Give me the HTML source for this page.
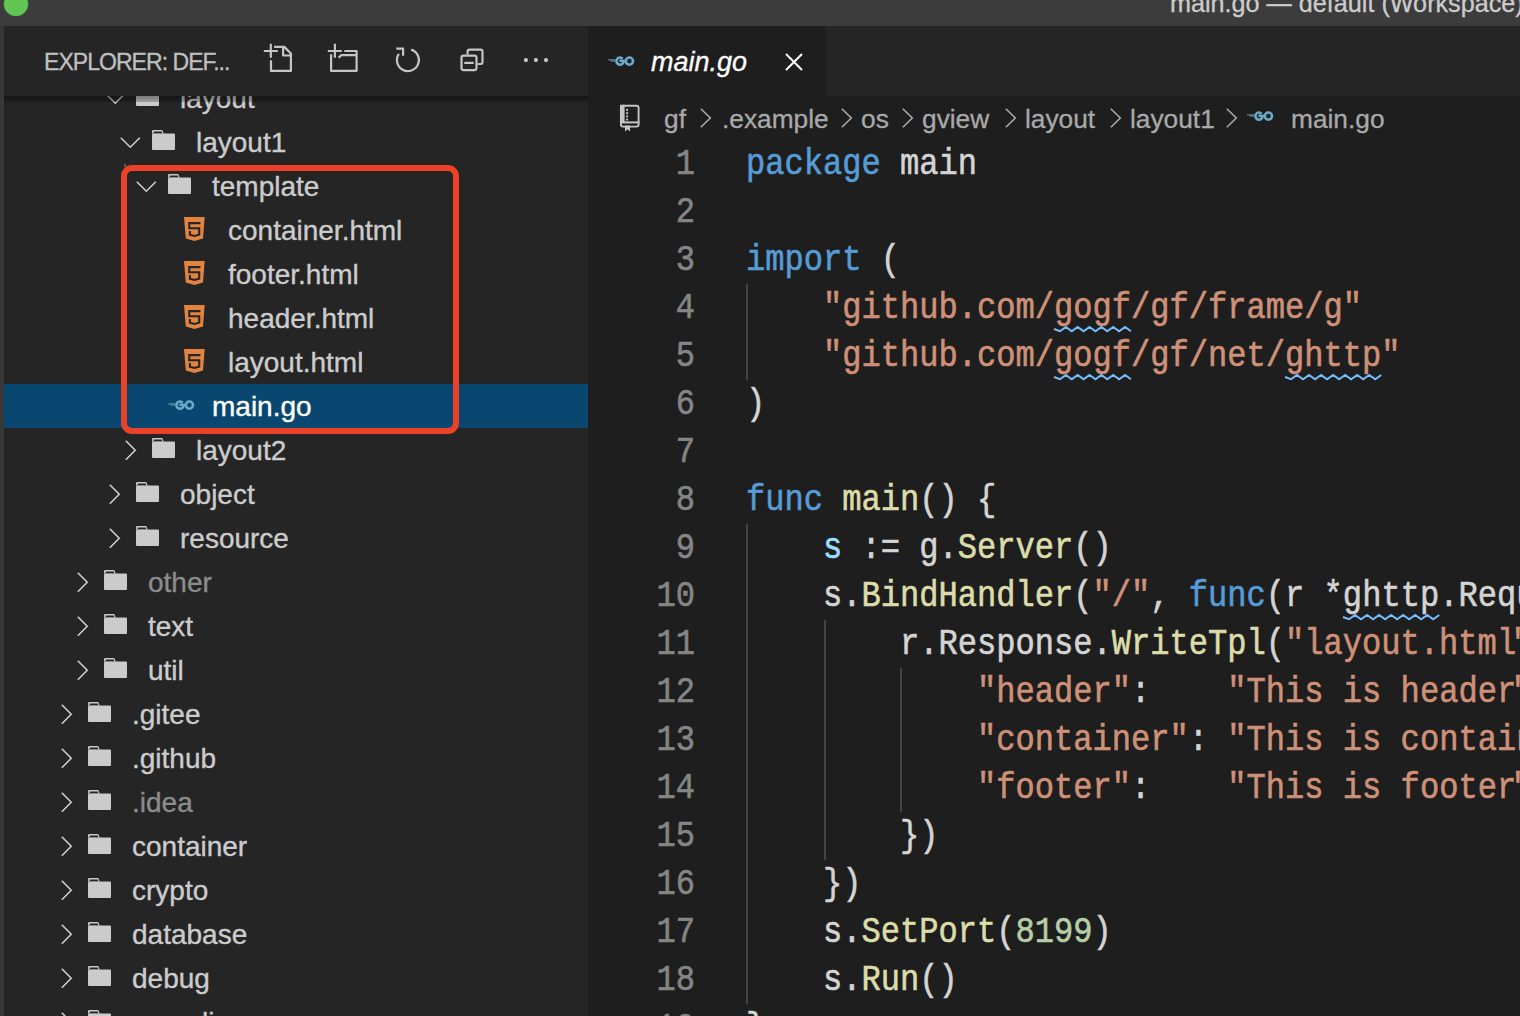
<!DOCTYPE html><html><head><meta charset="utf-8"><style>
*{margin:0;padding:0;box-sizing:border-box}
html,body{width:1520px;height:1016px;overflow:hidden;background:#3c3c3c;font-family:"Liberation Sans", sans-serif}
.a{position:absolute}
#title{left:0;top:0;width:1520px;height:26px;background:#3c3c3c}
#act{left:0;top:26px;width:4px;height:990px;background:#383838}
#side{left:4px;top:26px;width:584px;height:990px;background:#252526;overflow:hidden}
#shead{left:0;top:0;width:584px;height:70px;background:#252526;z-index:5}
#shadow{left:0;top:70px;width:584px;height:6px;z-index:5;background:linear-gradient(rgba(0,0,0,0.4),rgba(0,0,0,0.22))}
.row{position:absolute;left:0;width:584px;height:44px;color:#cccccc;font-size:28px;line-height:44px;white-space:nowrap;-webkit-text-stroke:0.35px currentColor}
.row .t{position:absolute;top:1px}
.row.dim{color:#8c8c8c}
.row.sel{background:#094771;color:#ffffff}
#tabs{left:588px;top:26px;width:932px;height:70px;background:#252526}
#tab{left:0;top:0;width:238px;height:70px;background:#1e1e1e}
#editor{left:588px;top:96px;width:932px;height:920px;background:#1e1e1e;overflow:hidden}
.crumb{position:absolute;top:1px;height:44px;line-height:44px;font-size:26.3px;color:#a9a9a9;white-space:nowrap;-webkit-text-stroke:0.3px currentColor}
.ln{position:absolute;width:200px;text-align:right;height:48px;line-height:48px;font-family:"Liberation Mono", monospace;font-size:36px;color:#858585;transform-origin:100% 0;transform:scaleX(0.8912);-webkit-text-stroke:0.6px currentColor}
.code{position:absolute;height:48px;line-height:48px;font-family:"Liberation Mono", monospace;font-size:36px;color:#d4d4d4;white-space:pre;transform-origin:0 0;transform:scaleX(0.8912);-webkit-text-stroke:0.6px currentColor}
.k{color:#569cd6} .s{color:#ce9178} .f{color:#dcdcaa} .n{color:#b5cea8} .v{color:#9cdcfe}
.guide{position:absolute;width:2px;background:#444444}
.sq{position:absolute;height:7px;overflow:visible}
</style></head><body><div id="title" class="a"><div class="a" style="left:4px;top:-8px;width:24px;height:24px;border-radius:50%;background:#62c554;box-shadow:0 0 0 0.8px #3a5a35"></div><div class="a" style="left:1170px;top:-12.3px;height:30px;line-height:30px;font-size:25.2px;color:#cccccc;white-space:nowrap;-webkit-text-stroke:0.3px currentColor">main.go — default (Workspace)</div></div><div id="act" class="a"></div><div id="side" class="a"><div id="shead" class="a"><div class="a" style="left:40px;top:21.2px;height:30px;line-height:30px;font-size:23px;color:#c0c0c0;letter-spacing:-0.95px;white-space:nowrap;-webkit-text-stroke:0.3px currentColor">EXPLORER: DEF...</div><svg class="a" style="left:254px;top:12px" width="40" height="40" viewBox="0 0 40 40" fill="none" stroke="#c5c5c5" stroke-width="2.2" stroke-linejoin="round"><path d="M5.8 13H19.8M12.8 5.8V19.8M16.1 8.9H26.3L32.9 15.5V32.9H13V22.2M25.1 8.9V17.5H32.9"/></svg><svg class="a" style="left:254px;top:12px" width="110" height="40" viewBox="0 0 110 40" fill="none" stroke="#c5c5c5" stroke-width="2.2" stroke-linejoin="round"><path d="M69.8 13H83.8M76.9 5.8V19.8M73.1 16.2V32.9H98.6V13H86.3M98.6 17.1H83.3L80.6 19.8"/></svg><svg class="a" style="left:384px;top:12px" width="40" height="40" viewBox="0 0 40 40" fill="none" stroke="#c5c5c5" stroke-width="2.2" stroke-linejoin="round"><path d="M23.2 11.6A11 11 0 1 1 10.9 15.8"/><path d="M8.3 10.7H15.1V17.7"/></svg><svg class="a" style="left:454px;top:20px" width="30" height="30" viewBox="0 0 30 30" fill="none" stroke="#c5c5c5" stroke-width="2.2" stroke-linejoin="round"><path d="M9.6 8.6V5.6A2 2 0 0 1 11.6 3.6H22.5A2 2 0 0 1 24.5 5.6V16A2 2 0 0 1 22.5 18H19.5"/><rect x="3.5" y="9.7" width="15" height="14.4" rx="2"/><path d="M6.3 16.9H15.7"/></svg><svg class="a" style="left:514px;top:26px" width="40" height="16" viewBox="0 0 40 16" fill="#c5c5c5"><circle cx="7.9" cy="8.1" r="2.1"/><circle cx="17.9" cy="8.1" r="2.1"/><circle cx="28" cy="8.1" r="2.1"/></svg></div><div id="shadow" class="a"></div><div class="row" style="top:50px"><svg class="a" style="left:101px;top:17px" width="21" height="12" viewBox="0 0 21 12"><polyline points="0.8,0.8 10.3,10.2 19.8,0.8" fill="none" stroke="#cccccc" stroke-width="1.6"/></svg><svg class="a" style="left:132px;top:10px" width="23" height="20" viewBox="0 0 23 20"><path d="M0 4.5V1.4A1.4 1.4 0 0 1 1.4 0H10.2L11.8 3.4H0Z" fill="#cbcbcb"/><rect x="1.6" y="1.6" width="8.4" height="1.9" rx="0.5" fill="#252526"/><rect x="0" y="3.4" width="23" height="16.6" rx="1" fill="#cbcbcb"/></svg><span class="t" style="left:176px">layout</span></div><div class="row" style="top:94px"><svg class="a" style="left:116px;top:17px" width="21" height="12" viewBox="0 0 21 12"><polyline points="0.8,0.8 10.3,10.2 19.8,0.8" fill="none" stroke="#cccccc" stroke-width="1.6"/></svg><svg class="a" style="left:148px;top:10px" width="23" height="20" viewBox="0 0 23 20"><path d="M0 4.5V1.4A1.4 1.4 0 0 1 1.4 0H10.2L11.8 3.4H0Z" fill="#cbcbcb"/><rect x="1.6" y="1.6" width="8.4" height="1.9" rx="0.5" fill="#252526"/><rect x="0" y="3.4" width="23" height="16.6" rx="1" fill="#cbcbcb"/></svg><span class="t" style="left:192px">layout1</span></div><div class="row" style="top:138px"><svg class="a" style="left:132px;top:17px" width="21" height="12" viewBox="0 0 21 12"><polyline points="0.8,0.8 10.3,10.2 19.8,0.8" fill="none" stroke="#cccccc" stroke-width="1.6"/></svg><svg class="a" style="left:164px;top:10px" width="23" height="20" viewBox="0 0 23 20"><path d="M0 4.5V1.4A1.4 1.4 0 0 1 1.4 0H10.2L11.8 3.4H0Z" fill="#cbcbcb"/><rect x="1.6" y="1.6" width="8.4" height="1.9" rx="0.5" fill="#252526"/><rect x="0" y="3.4" width="23" height="16.6" rx="1" fill="#cbcbcb"/></svg><span class="t" style="left:208px">template</span></div><div class="row" style="top:182px"><svg class="a" style="left:180px;top:9px" width="21" height="24" viewBox="0 0 21 24"><path d="M0 0H20.7L19 21.6L10.4 24L1.8 21.6Z" fill="#e2843f"/><path d="M4.2 6.1H16.4M5.3 5V11.3M4.2 11.3H16.1M15.2 10.3V17.9M15.8 17.4L10.4 18.9L5 17.4M5.9 14.1V18" fill="none" stroke="#252526" stroke-width="2.1"/></svg><span class="t" style="left:224px">container.html</span></div><div class="row" style="top:226px"><svg class="a" style="left:180px;top:9px" width="21" height="24" viewBox="0 0 21 24"><path d="M0 0H20.7L19 21.6L10.4 24L1.8 21.6Z" fill="#e2843f"/><path d="M4.2 6.1H16.4M5.3 5V11.3M4.2 11.3H16.1M15.2 10.3V17.9M15.8 17.4L10.4 18.9L5 17.4M5.9 14.1V18" fill="none" stroke="#252526" stroke-width="2.1"/></svg><span class="t" style="left:224px">footer.html</span></div><div class="row" style="top:270px"><svg class="a" style="left:180px;top:9px" width="21" height="24" viewBox="0 0 21 24"><path d="M0 0H20.7L19 21.6L10.4 24L1.8 21.6Z" fill="#e2843f"/><path d="M4.2 6.1H16.4M5.3 5V11.3M4.2 11.3H16.1M15.2 10.3V17.9M15.8 17.4L10.4 18.9L5 17.4M5.9 14.1V18" fill="none" stroke="#252526" stroke-width="2.1"/></svg><span class="t" style="left:224px">header.html</span></div><div class="row" style="top:314px"><svg class="a" style="left:180px;top:9px" width="21" height="24" viewBox="0 0 21 24"><path d="M0 0H20.7L19 21.6L10.4 24L1.8 21.6Z" fill="#e2843f"/><path d="M4.2 6.1H16.4M5.3 5V11.3M4.2 11.3H16.1M15.2 10.3V17.9M15.8 17.4L10.4 18.9L5 17.4M5.9 14.1V18" fill="none" stroke="#252526" stroke-width="2.1"/></svg><span class="t" style="left:224px">layout.html</span></div><div class="row sel" style="top:358px"><svg class="a" style="left:164px;top:14.7px" width="28" height="12" viewBox="0 0 28 12"><rect x="0" y="4.2" width="7" height="1.2" fill="#55869c"/><rect x="2.5" y="5.2" width="4.5" height="1.4" fill="#55869c"/><circle cx="21.4" cy="6.1" r="3.6" fill="none" stroke="#6aaac8" stroke-width="2.6"/><path d="M14.6 3.6A3.6 3.6 0 1 0 15.6 5.8H11.4" fill="none" stroke="#6aaac8" stroke-width="2.6"/></svg><span class="t" style="left:208px">main.go</span></div><div class="row" style="top:402px"><svg class="a" style="left:121px;top:12px" width="12" height="21" viewBox="0 0 12 21"><polyline points="0.8,0.8 10.2,10.3 0.8,19.8" fill="none" stroke="#cccccc" stroke-width="1.6"/></svg><svg class="a" style="left:148px;top:10px" width="23" height="20" viewBox="0 0 23 20"><path d="M0 4.5V1.4A1.4 1.4 0 0 1 1.4 0H10.2L11.8 3.4H0Z" fill="#cbcbcb"/><rect x="1.6" y="1.6" width="8.4" height="1.9" rx="0.5" fill="#252526"/><rect x="0" y="3.4" width="23" height="16.6" rx="1" fill="#cbcbcb"/></svg><span class="t" style="left:192px">layout2</span></div><div class="row" style="top:446px"><svg class="a" style="left:105px;top:12px" width="12" height="21" viewBox="0 0 12 21"><polyline points="0.8,0.8 10.2,10.3 0.8,19.8" fill="none" stroke="#cccccc" stroke-width="1.6"/></svg><svg class="a" style="left:132px;top:10px" width="23" height="20" viewBox="0 0 23 20"><path d="M0 4.5V1.4A1.4 1.4 0 0 1 1.4 0H10.2L11.8 3.4H0Z" fill="#cbcbcb"/><rect x="1.6" y="1.6" width="8.4" height="1.9" rx="0.5" fill="#252526"/><rect x="0" y="3.4" width="23" height="16.6" rx="1" fill="#cbcbcb"/></svg><span class="t" style="left:176px">object</span></div><div class="row" style="top:490px"><svg class="a" style="left:105px;top:12px" width="12" height="21" viewBox="0 0 12 21"><polyline points="0.8,0.8 10.2,10.3 0.8,19.8" fill="none" stroke="#cccccc" stroke-width="1.6"/></svg><svg class="a" style="left:132px;top:10px" width="23" height="20" viewBox="0 0 23 20"><path d="M0 4.5V1.4A1.4 1.4 0 0 1 1.4 0H10.2L11.8 3.4H0Z" fill="#cbcbcb"/><rect x="1.6" y="1.6" width="8.4" height="1.9" rx="0.5" fill="#252526"/><rect x="0" y="3.4" width="23" height="16.6" rx="1" fill="#cbcbcb"/></svg><span class="t" style="left:176px">resource</span></div><div class="row dim" style="top:534px"><svg class="a" style="left:73px;top:12px" width="12" height="21" viewBox="0 0 12 21"><polyline points="0.8,0.8 10.2,10.3 0.8,19.8" fill="none" stroke="#cccccc" stroke-width="1.6"/></svg><svg class="a" style="left:100px;top:10px" width="23" height="20" viewBox="0 0 23 20"><path d="M0 4.5V1.4A1.4 1.4 0 0 1 1.4 0H10.2L11.8 3.4H0Z" fill="#cbcbcb"/><rect x="1.6" y="1.6" width="8.4" height="1.9" rx="0.5" fill="#252526"/><rect x="0" y="3.4" width="23" height="16.6" rx="1" fill="#cbcbcb"/></svg><span class="t" style="left:144px">other</span></div><div class="row" style="top:578px"><svg class="a" style="left:73px;top:12px" width="12" height="21" viewBox="0 0 12 21"><polyline points="0.8,0.8 10.2,10.3 0.8,19.8" fill="none" stroke="#cccccc" stroke-width="1.6"/></svg><svg class="a" style="left:100px;top:10px" width="23" height="20" viewBox="0 0 23 20"><path d="M0 4.5V1.4A1.4 1.4 0 0 1 1.4 0H10.2L11.8 3.4H0Z" fill="#cbcbcb"/><rect x="1.6" y="1.6" width="8.4" height="1.9" rx="0.5" fill="#252526"/><rect x="0" y="3.4" width="23" height="16.6" rx="1" fill="#cbcbcb"/></svg><span class="t" style="left:144px">text</span></div><div class="row" style="top:622px"><svg class="a" style="left:73px;top:12px" width="12" height="21" viewBox="0 0 12 21"><polyline points="0.8,0.8 10.2,10.3 0.8,19.8" fill="none" stroke="#cccccc" stroke-width="1.6"/></svg><svg class="a" style="left:100px;top:10px" width="23" height="20" viewBox="0 0 23 20"><path d="M0 4.5V1.4A1.4 1.4 0 0 1 1.4 0H10.2L11.8 3.4H0Z" fill="#cbcbcb"/><rect x="1.6" y="1.6" width="8.4" height="1.9" rx="0.5" fill="#252526"/><rect x="0" y="3.4" width="23" height="16.6" rx="1" fill="#cbcbcb"/></svg><span class="t" style="left:144px">util</span></div><div class="row" style="top:666px"><svg class="a" style="left:57px;top:12px" width="12" height="21" viewBox="0 0 12 21"><polyline points="0.8,0.8 10.2,10.3 0.8,19.8" fill="none" stroke="#cccccc" stroke-width="1.6"/></svg><svg class="a" style="left:84px;top:10px" width="23" height="20" viewBox="0 0 23 20"><path d="M0 4.5V1.4A1.4 1.4 0 0 1 1.4 0H10.2L11.8 3.4H0Z" fill="#cbcbcb"/><rect x="1.6" y="1.6" width="8.4" height="1.9" rx="0.5" fill="#252526"/><rect x="0" y="3.4" width="23" height="16.6" rx="1" fill="#cbcbcb"/></svg><span class="t" style="left:128px">.gitee</span></div><div class="row" style="top:710px"><svg class="a" style="left:57px;top:12px" width="12" height="21" viewBox="0 0 12 21"><polyline points="0.8,0.8 10.2,10.3 0.8,19.8" fill="none" stroke="#cccccc" stroke-width="1.6"/></svg><svg class="a" style="left:84px;top:10px" width="23" height="20" viewBox="0 0 23 20"><path d="M0 4.5V1.4A1.4 1.4 0 0 1 1.4 0H10.2L11.8 3.4H0Z" fill="#cbcbcb"/><rect x="1.6" y="1.6" width="8.4" height="1.9" rx="0.5" fill="#252526"/><rect x="0" y="3.4" width="23" height="16.6" rx="1" fill="#cbcbcb"/></svg><span class="t" style="left:128px">.github</span></div><div class="row dim" style="top:754px"><svg class="a" style="left:57px;top:12px" width="12" height="21" viewBox="0 0 12 21"><polyline points="0.8,0.8 10.2,10.3 0.8,19.8" fill="none" stroke="#cccccc" stroke-width="1.6"/></svg><svg class="a" style="left:84px;top:10px" width="23" height="20" viewBox="0 0 23 20"><path d="M0 4.5V1.4A1.4 1.4 0 0 1 1.4 0H10.2L11.8 3.4H0Z" fill="#cbcbcb"/><rect x="1.6" y="1.6" width="8.4" height="1.9" rx="0.5" fill="#252526"/><rect x="0" y="3.4" width="23" height="16.6" rx="1" fill="#cbcbcb"/></svg><span class="t" style="left:128px">.idea</span></div><div class="row" style="top:798px"><svg class="a" style="left:57px;top:12px" width="12" height="21" viewBox="0 0 12 21"><polyline points="0.8,0.8 10.2,10.3 0.8,19.8" fill="none" stroke="#cccccc" stroke-width="1.6"/></svg><svg class="a" style="left:84px;top:10px" width="23" height="20" viewBox="0 0 23 20"><path d="M0 4.5V1.4A1.4 1.4 0 0 1 1.4 0H10.2L11.8 3.4H0Z" fill="#cbcbcb"/><rect x="1.6" y="1.6" width="8.4" height="1.9" rx="0.5" fill="#252526"/><rect x="0" y="3.4" width="23" height="16.6" rx="1" fill="#cbcbcb"/></svg><span class="t" style="left:128px">container</span></div><div class="row" style="top:842px"><svg class="a" style="left:57px;top:12px" width="12" height="21" viewBox="0 0 12 21"><polyline points="0.8,0.8 10.2,10.3 0.8,19.8" fill="none" stroke="#cccccc" stroke-width="1.6"/></svg><svg class="a" style="left:84px;top:10px" width="23" height="20" viewBox="0 0 23 20"><path d="M0 4.5V1.4A1.4 1.4 0 0 1 1.4 0H10.2L11.8 3.4H0Z" fill="#cbcbcb"/><rect x="1.6" y="1.6" width="8.4" height="1.9" rx="0.5" fill="#252526"/><rect x="0" y="3.4" width="23" height="16.6" rx="1" fill="#cbcbcb"/></svg><span class="t" style="left:128px">crypto</span></div><div class="row" style="top:886px"><svg class="a" style="left:57px;top:12px" width="12" height="21" viewBox="0 0 12 21"><polyline points="0.8,0.8 10.2,10.3 0.8,19.8" fill="none" stroke="#cccccc" stroke-width="1.6"/></svg><svg class="a" style="left:84px;top:10px" width="23" height="20" viewBox="0 0 23 20"><path d="M0 4.5V1.4A1.4 1.4 0 0 1 1.4 0H10.2L11.8 3.4H0Z" fill="#cbcbcb"/><rect x="1.6" y="1.6" width="8.4" height="1.9" rx="0.5" fill="#252526"/><rect x="0" y="3.4" width="23" height="16.6" rx="1" fill="#cbcbcb"/></svg><span class="t" style="left:128px">database</span></div><div class="row" style="top:930px"><svg class="a" style="left:57px;top:12px" width="12" height="21" viewBox="0 0 12 21"><polyline points="0.8,0.8 10.2,10.3 0.8,19.8" fill="none" stroke="#cccccc" stroke-width="1.6"/></svg><svg class="a" style="left:84px;top:10px" width="23" height="20" viewBox="0 0 23 20"><path d="M0 4.5V1.4A1.4 1.4 0 0 1 1.4 0H10.2L11.8 3.4H0Z" fill="#cbcbcb"/><rect x="1.6" y="1.6" width="8.4" height="1.9" rx="0.5" fill="#252526"/><rect x="0" y="3.4" width="23" height="16.6" rx="1" fill="#cbcbcb"/></svg><span class="t" style="left:128px">debug</span></div><div class="row" style="top:974px"><svg class="a" style="left:57px;top:12px" width="12" height="21" viewBox="0 0 12 21"><polyline points="0.8,0.8 10.2,10.3 0.8,19.8" fill="none" stroke="#cccccc" stroke-width="1.6"/></svg><svg class="a" style="left:84px;top:10px" width="23" height="20" viewBox="0 0 23 20"><path d="M0 4.5V1.4A1.4 1.4 0 0 1 1.4 0H10.2L11.8 3.4H0Z" fill="#cbcbcb"/><rect x="1.6" y="1.6" width="8.4" height="1.9" rx="0.5" fill="#252526"/><rect x="0" y="3.4" width="23" height="16.6" rx="1" fill="#cbcbcb"/></svg><span class="t" style="left:128px">encoding</span></div></div><div class="a" style="left:124px;top:164px;width:1.6px;height:3px;background:#5a5a5a;z-index:9"></div><div class="a" style="left:121px;top:164.5px;width:338px;height:269.5px;border:6px solid #ea4128;border-radius:11px;z-index:10"></div><div id="tabs" class="a"><div id="tab" class="a"><svg class="a" style="left:20px;top:29px" width="28" height="12" viewBox="0 0 28 12"><rect x="0" y="4.2" width="7" height="1.2" fill="#55869c"/><rect x="2.5" y="5.2" width="4.5" height="1.4" fill="#55869c"/><circle cx="21.4" cy="6.1" r="3.6" fill="none" stroke="#6aaac8" stroke-width="2.6"/><path d="M14.6 3.6A3.6 3.6 0 1 0 15.6 5.8H11.4" fill="none" stroke="#6aaac8" stroke-width="2.6"/></svg><div class="a" style="left:63px;top:14px;height:44px;line-height:44px;font-size:27px;font-style:italic;color:#ffffff;white-space:nowrap;-webkit-text-stroke:0.3px currentColor">main.go</div><svg class="a" style="left:197px;top:27px" width="18" height="18" viewBox="0 0 18 18"><path d="M1 1L17 17M17 1L1 17" stroke="#ffffff" stroke-width="2"/></svg></div></div><div id="editor" class="a"><svg class="a" style="left:30px;top:6px" width="24" height="30" viewBox="0 0 24 30"><rect x="2.9" y="3.7" width="17.7" height="20.9" rx="2" fill="none" stroke="#c5c5c5" stroke-width="1.9"/><rect x="2" y="2.8" width="4.6" height="17.6" fill="#c5c5c5"/><rect x="2" y="19.4" width="19.5" height="2" fill="#c5c5c5"/><circle cx="9.1" cy="7.9" r="1.1" fill="#c5c5c5"/><circle cx="9.1" cy="11.2" r="1.1" fill="#c5c5c5"/><circle cx="9.1" cy="14.4" r="1.1" fill="#c5c5c5"/><circle cx="9.1" cy="17.6" r="1.1" fill="#c5c5c5"/><path d="M7 23.4H12V29.5L9.5 27.3L7 29.5Z" fill="#c5c5c5"/></svg><div class="crumb" style="left:76px">gf</div><div class="crumb" style="left:134px">.example</div><div class="crumb" style="left:273px">os</div><div class="crumb" style="left:334px">gview</div><div class="crumb" style="left:437px">layout</div><div class="crumb" style="left:542px">layout1</div><svg class="a" style="left:112px;top:12px" width="12" height="21" viewBox="0 0 12 21"><polyline points="0.8,0.8 10.3,10 0.8,19.2" fill="none" stroke="#a9a9a9" stroke-width="1.6"/></svg><svg class="a" style="left:253px;top:12px" width="12" height="21" viewBox="0 0 12 21"><polyline points="0.8,0.8 10.3,10 0.8,19.2" fill="none" stroke="#a9a9a9" stroke-width="1.6"/></svg><svg class="a" style="left:314px;top:12px" width="12" height="21" viewBox="0 0 12 21"><polyline points="0.8,0.8 10.3,10 0.8,19.2" fill="none" stroke="#a9a9a9" stroke-width="1.6"/></svg><svg class="a" style="left:417px;top:12px" width="12" height="21" viewBox="0 0 12 21"><polyline points="0.8,0.8 10.3,10 0.8,19.2" fill="none" stroke="#a9a9a9" stroke-width="1.6"/></svg><svg class="a" style="left:522px;top:12px" width="12" height="21" viewBox="0 0 12 21"><polyline points="0.8,0.8 10.3,10 0.8,19.2" fill="none" stroke="#a9a9a9" stroke-width="1.6"/></svg><svg class="a" style="left:638px;top:12px" width="12" height="21" viewBox="0 0 12 21"><polyline points="0.8,0.8 10.3,10 0.8,19.2" fill="none" stroke="#a9a9a9" stroke-width="1.6"/></svg><svg class="a" style="left:659px;top:14px" width="28" height="12" viewBox="0 0 28 12"><rect x="0" y="4.2" width="7" height="1.2" fill="#55869c"/><rect x="2.5" y="5.2" width="4.5" height="1.4" fill="#55869c"/><circle cx="21.4" cy="6.1" r="3.6" fill="none" stroke="#6aaac8" stroke-width="2.6"/><path d="M14.6 3.6A3.6 3.6 0 1 0 15.6 5.8H11.4" fill="none" stroke="#6aaac8" stroke-width="2.6"/></svg><div class="crumb" style="left:703px">main.go</div><div class="ln" style="left:-93.5px;top:45px">1</div><div class="code" style="left:158px;top:44.7px"><span class="k">package</span> main</div><div class="ln" style="left:-93.5px;top:93px">2</div><div class="code" style="left:158px;top:92.7px"></div><div class="ln" style="left:-93.5px;top:141px">3</div><div class="code" style="left:158px;top:140.7px"><span class="k">import</span> (</div><div class="ln" style="left:-93.5px;top:189px">4</div><div class="code" style="left:158px;top:188.7px">    <span class="s">"github.com/gogf/gf/frame/g"</span></div><div class="ln" style="left:-93.5px;top:237px">5</div><div class="code" style="left:158px;top:236.7px">    <span class="s">"github.com/gogf/gf/net/ghttp"</span></div><div class="ln" style="left:-93.5px;top:285px">6</div><div class="code" style="left:158px;top:284.7px">)</div><div class="ln" style="left:-93.5px;top:333px">7</div><div class="code" style="left:158px;top:332.7px"></div><div class="ln" style="left:-93.5px;top:381px">8</div><div class="code" style="left:158px;top:380.7px"><span class="k">func</span> <span class="f">main</span>() {</div><div class="ln" style="left:-93.5px;top:429px">9</div><div class="code" style="left:158px;top:428.7px">    <span class="v">s</span> := g.<span class="f">Server</span>()</div><div class="ln" style="left:-93.5px;top:477px">10</div><div class="code" style="left:158px;top:476.7px">    s.<span class="f">BindHandler</span>(<span class="s">"/"</span>, <span class="k">func</span>(r *ghttp.Request) {</div><div class="ln" style="left:-93.5px;top:525px">11</div><div class="code" style="left:158px;top:524.7px">        r.Response.<span class="f">WriteTpl</span>(<span class="s">"layout.html<span style="position:relative;left:-5px">"</span></span>, g.Map{</div><div class="ln" style="left:-93.5px;top:573px">12</div><div class="code" style="left:158px;top:572.7px">            <span class="s">"header"</span>:    <span class="s">"This is header<span style="position:relative;left:-5px">"</span></span>,</div><div class="ln" style="left:-93.5px;top:621px">13</div><div class="code" style="left:158px;top:620.7px">            <span class="s">"container"</span>: <span class="s">"This is container"</span>,</div><div class="ln" style="left:-93.5px;top:669px">14</div><div class="code" style="left:158px;top:668.7px">            <span class="s">"footer"</span>:    <span class="s">"This is footer<span style="position:relative;left:-5px">"</span></span>,</div><div class="ln" style="left:-93.5px;top:717px">15</div><div class="code" style="left:158px;top:716.7px">        })</div><div class="ln" style="left:-93.5px;top:765px">16</div><div class="code" style="left:158px;top:764.7px">    })</div><div class="ln" style="left:-93.5px;top:813px">17</div><div class="code" style="left:158px;top:812.7px">    s.<span class="f">SetPort</span>(<span class="n">8199</span>)</div><div class="ln" style="left:-93.5px;top:861px">18</div><div class="code" style="left:158px;top:860.7px">    s.<span class="f">Run</span>()</div><div class="ln" style="left:-93.5px;top:909px">19</div><div class="code" style="left:158px;top:908.7px">}</div><div class="guide" style="left:158.00px;top:188px;height:96px"></div><div class="guide" style="left:158.00px;top:428px;height:480px"></div><div class="guide" style="left:236.00px;top:524px;height:240px"></div><div class="guide" style="left:312.00px;top:572px;height:144px"></div><svg class="sq" style="left:466.00px;top:229.5px" width="77.00" height="7" viewBox="0 0 77.00 7"><path d="M0 3 L5.92 5.2 L11.85 1 L17.77 5.2 L23.69 1 L29.62 5.2 L35.54 1 L41.46 5.2 L47.38 1 L53.31 5.2 L59.23 1 L65.15 5.2 L71.08 1 L77.00 5.2" fill="none" stroke="#75beff" stroke-width="2"/></svg><svg class="sq" style="left:466.00px;top:277.5px" width="77.00" height="7" viewBox="0 0 77.00 7"><path d="M0 3 L5.92 5.2 L11.85 1 L17.77 5.2 L23.69 1 L29.62 5.2 L35.54 1 L41.46 5.2 L47.38 1 L53.31 5.2 L59.23 1 L65.15 5.2 L71.08 1 L77.00 5.2" fill="none" stroke="#75beff" stroke-width="2"/></svg><svg class="sq" style="left:697.00px;top:277.5px" width="96.25" height="7" viewBox="0 0 96.25 7"><path d="M0 3 L6.02 5.2 L12.03 1 L18.05 5.2 L24.06 1 L30.08 5.2 L36.09 1 L42.11 5.2 L48.12 1 L54.14 5.2 L60.16 1 L66.17 5.2 L72.19 1 L78.20 5.2 L84.22 1 L90.23 5.2 L96.25 1" fill="none" stroke="#75beff" stroke-width="2"/></svg><svg class="sq" style="left:754.75px;top:517.5px" width="96.25" height="7" viewBox="0 0 96.25 7"><path d="M0 3 L6.02 5.2 L12.03 1 L18.05 5.2 L24.06 1 L30.08 5.2 L36.09 1 L42.11 5.2 L48.12 1 L54.14 5.2 L60.16 1 L66.17 5.2 L72.19 1 L78.20 5.2 L84.22 1 L90.23 5.2 L96.25 1" fill="none" stroke="#75beff" stroke-width="2"/></svg></div></body></html>
